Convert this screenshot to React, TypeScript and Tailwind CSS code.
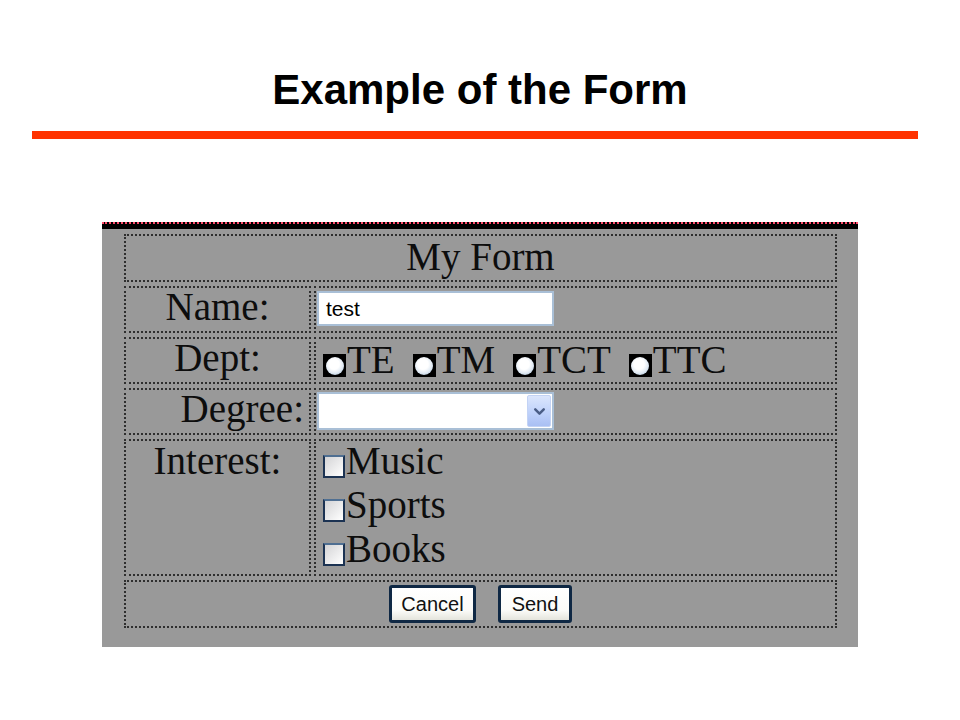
import { ChevronDown } from "lucide-react";

const cell = "border-2 border-dotted border-[#2e2e2e]";
const serif = "font-['Liberation_Serif',serif] text-[39px] leading-[38px] text-[#0d0d0d]";

function Radio({ label }: { label: string }) {
    return (
        <div className="flex items-start mr-[18px]">
            <div className="mt-[13px] w-[23px] h-[23px] bg-black flex items-center justify-center">
                <div className="w-[18px] h-[18px] rounded-full bg-[radial-gradient(circle_at_45%_40%,#ffffff_35%,#dfe9f3_62%,#86a4c0_100%)]" />
            </div>
            <span className="ml-[1px]">{label}</span>
        </div>
    )
}

function Check({ label }: { label: string }) {
    return (
        <div className="h-[46px] flex items-start">
            <div className="mt-[13px] w-[22px] h-[23px] border-2 border-[#1b3252] border-t-[#4f6f92] bg-[linear-gradient(135deg,#d4d4d6,#ffffff)]" />
            <span className="ml-[1px]">{label}</span>
        </div>
    )
}

function Button({ label, width }: { label: string, width: string }) {
    return (
        <div className={`${width} h-[38px] rounded-[3px] border-[3px] border-[#0f2844] bg-[linear-gradient(180deg,#ffffff_0%,#fbfbf8_70%,#e4e4dc_100%)] flex items-center justify-center font-['Liberation_Sans',sans-serif] text-[20px] text-[#111]`}>
            {label}
        </div>
    )
}

export default function App() {
    return (
        <div className="w-[960px] h-[720px] bg-white flex flex-col overflow-hidden">
            <h1 className="pt-[67px] text-center font-['Liberation_Sans',sans-serif] font-bold text-[42px] leading-[46px] text-black">
                Example of the Form
            </h1>
            <div className="mt-[18px] ml-[32px] w-[886px] h-[8px] bg-[#ff3300]" />

            <div className="mt-[83px] ml-[102px] w-[756px] h-[425px] bg-[#999999]">
                <div className="h-[7px] bg-black border-t-2 border-dotted border-[#ff4a6a]" />
                <div className={`ml-[22px] mt-[5px] w-[713px] grid grid-cols-[187px_523px] gap-x-[3px] gap-y-[4px] ${serif}`}>
                    <div className={`${cell} col-span-2 h-[48px] pt-[2px] text-center`}>My Form</div>

                    <div className={`${cell} h-[47px] text-center`}>Name:</div>
                    <div className={`${cell} h-[47px] pl-[1px] pt-[3px]`}>
                        <div className="w-[237px] h-[35px] bg-white border-2 border-[#a9bfd6] pl-[7px] flex items-center font-['Liberation_Sans',sans-serif] text-[21px] leading-none text-black">
                            test
                        </div>
                    </div>

                    <div className={`${cell} h-[47px] text-center`}>Dept:</div>
                    <div className={`${cell} h-[47px] pl-[7px] pt-[2px] flex items-start`}>
                        <Radio label="TE" />
                        <Radio label="TM" />
                        <Radio label="TCT" />
                        <Radio label="TTC" />
                    </div>

                    <div className={`${cell} h-[47px] text-right pr-[5px]`}>Degree:</div>
                    <div className={`${cell} h-[47px] pl-[1px] pt-[2px]`}>
                        <div className="w-[237px] h-[38px] bg-white border-2 border-[#a9bfd6] flex justify-end p-[1px]">
                            <div className="w-[24px] h-full rounded-[2px] border border-[#c3d3f5] bg-[linear-gradient(180deg,#dbe6fd_0%,#bdd0fa_60%,#a9bff3_100%)] flex items-center justify-center">
                                <ChevronDown size={17} strokeWidth={3.5} color="#4a5d86" />
                            </div>
                        </div>
                    </div>

                    <div className={`${cell} h-[137px] text-center pt-[1px]`}>Interest:</div>
                    <div className={`${cell} h-[137px] pl-[7px] pt-[1px] flex flex-col`}>
                        <Check label="Music" />
                        <Check label="Sports" />
                        <Check label="Books" />
                    </div>

                    <div className={`${cell} col-span-2 h-[48px] flex items-center justify-center gap-[22px]`}>
                        <Button label="Cancel" width="w-[87px]" />
                        <Button label="Send" width="w-[74px]" />
                    </div>
                </div>
            </div>
        </div>
    )
}
